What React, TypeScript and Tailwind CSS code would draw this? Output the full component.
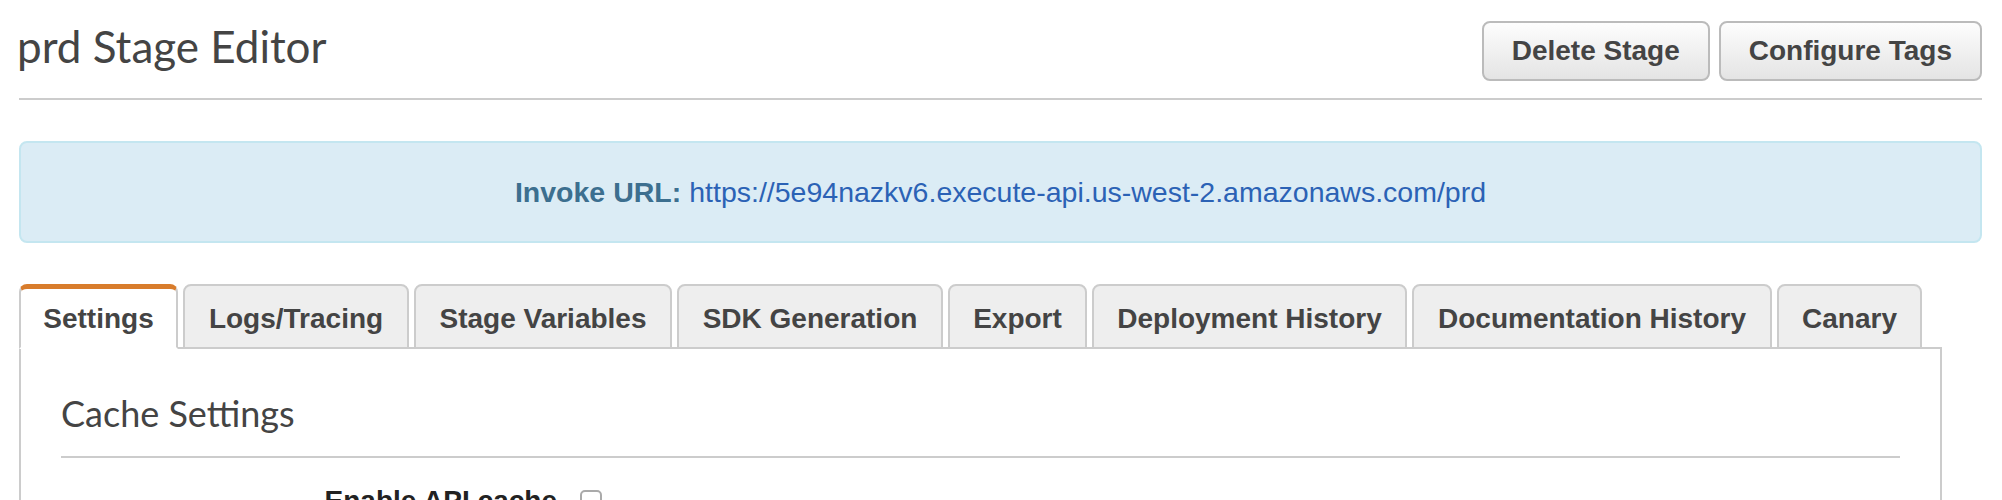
import { useState } from "react";

const tabs = [
  { name: "Settings", w: "w-[159px]" },
  { name: "Logs/Tracing", w: "w-[226px]" },
  { name: "Stage Variables", w: "w-[258px]" },
  { name: "SDK Generation", w: "w-[266px]" },
  { name: "Export", w: "w-[139px]" },
  { name: "Deployment History", w: "w-[315px]" },
  { name: "Documentation History", w: "w-[360px]" },
  { name: "Canary", w: "w-[145px]" },
];

const App = () => {
  const [active, setActive] = useState("Settings");
  const [cacheOn, setCacheOn] = useState(false);

  return (
    <div className="min-h-screen bg-white pl-[19px] pr-[20px] text-[#444] font-['Liberation_Sans',Arial,sans-serif]">
      {/* Header */}
      <div className="flex items-start justify-between pt-[21px] pb-[17px] border-b-2 border-[#ccc]">
        <h1 className="mt-[3px] -ml-[2px] text-[44px] leading-none font-normal text-[#444] font-['Lato',sans-serif]">
          prd Stage Editor
        </h1>
        <div className="flex gap-[9px]">
          <button className="h-[60px] px-[28px] rounded-[8px] border-2 border-[#bbb] bg-gradient-to-b from-[#fdfdfd] to-[#e4e4e4] text-[28px] font-bold text-[#444]">
            Delete Stage
          </button>
          <button className="h-[60px] px-[28px] rounded-[8px] border-2 border-[#bbb] bg-gradient-to-b from-[#fdfdfd] to-[#e4e4e4] text-[28px] font-bold text-[#444]">
            Configure Tags
          </button>
        </div>
      </div>

      {/* Invoke URL */}
      <div className="mt-[41px] h-[102px] flex items-center justify-center rounded-[8px] border-2 border-[#c4e6f0] bg-[#dbecf5] text-[28.5px]">
        <span className="font-bold text-[#3c6f8f]">Invoke URL:</span>
        <a className="ml-[8px] text-[#2b62b5]">https://5e94nazkv6.execute-api.us-west-2.amazonaws.com/prd</a>
      </div>

      {/* Tabs */}
      <div className="mt-[41px] mr-[40px]">
        <div className="relative z-10 -mb-[2px] flex items-end gap-[5px]">
          {tabs.map(t => (
            <button
              key={t.name}
              onClick={() => setActive(t.name)}
              className={
                t.name === active
                  ? `${t.w} h-[65px] pt-[1px] rounded-t-[8px] border-2 border-[#ccc] border-t-[5px] border-t-[#d87c2c] border-b-white bg-white text-[28px] font-bold text-[#444]`
                  : `${t.w} h-[65px] pt-[4px] rounded-t-[8px] border-2 border-[#ccc] bg-[#eee] text-[28px] font-bold text-[#444]`
              }
            >
              {t.name}
            </button>
          ))}
        </div>

        <div className="border-2 border-[#ccc] px-[40px] pt-[46px] pb-[40px]">
          <h2 className="pb-[25px] border-b-2 border-[#ccc] text-[36px] leading-none font-normal text-[#444] font-['Lato',sans-serif]">
            Cache Settings
          </h2>
          <div className="mt-[29px] flex items-center">
            <label className="w-[496px] text-right text-[28px] leading-none font-bold text-[#222]">
              Enable API cache
            </label>
            <button
              onClick={() => setCacheOn(!cacheOn)}
              className="ml-[23px] w-[22px] h-[22px] rounded-[5px] border-2 border-[#aaa] bg-white"
            />
          </div>
        </div>
      </div>
    </div>
  );
};

export default App;
